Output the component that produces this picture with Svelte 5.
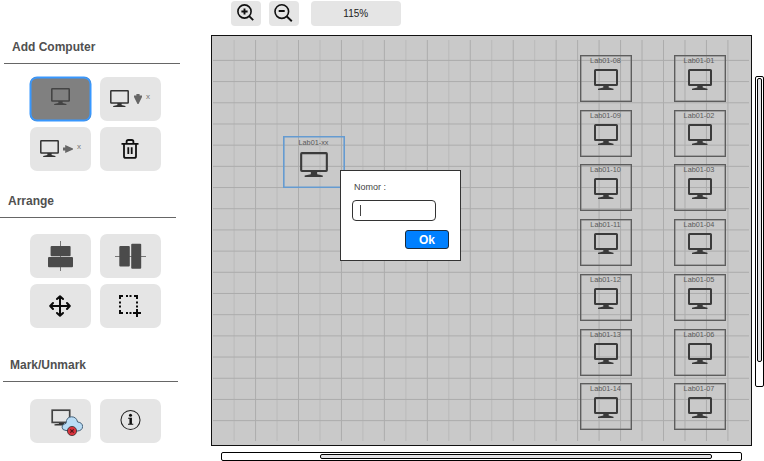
<script>
  const nodes = [];
  const rows = [55, 109.7, 164.3, 219, 274, 328.7, 383.3];
  for (let i = 0; i < 7; i++) {
    nodes.push({ name: 'Lab01-' + String(i + 8).padStart(2, '0'), x: 580, y: rows[i] });
    nodes.push({ name: 'Lab01-0' + (i + 1), x: 673.5, y: rows[i] });
  }
  const cols = Array.from({ length: 24 }, (_, i) => 22.1 + i * 21.47);
  const lines = Array.from({ length: 18 }, (_, i) => 24.4 + i * 21.19);
</script>

{#snippet monitor(w, h, color, sw)}
  <svg width={w} height={h} viewBox="0 0 24 21" preserveAspectRatio="none" style="color:{color}">
    <rect x="1" y="1" width="22" height="15" rx="0.6" fill="none" stroke="currentColor" stroke-width={sw} />
    <path d="M9.3 16h5.4v2.6l4.8 1.1v1.2H4v-1.2l5.3-1.1z" fill="currentColor" />
  </svg>
{/snippet}

<div class="app">
  <aside>
    <section class="add">
      <h2>Add Computer</h2>
      <div class="buttons">
        <button class="active" aria-label="Add one"><span class="up">{@render monitor(19, 17, '#444', 2)}</span></button>
        <button class="multi" aria-label="Add column">
          {@render monitor(19, 17, '#333', 1.9)}
          <svg width="8" height="10" viewBox="0 0 8 10"><path d="M0 1.4h2.4V0h3.2v1.4H8V3L4.5 10h-1L0 3z" fill="#666" /></svg>
          <small>x</small>
        </button>
        <button class="multi row" aria-label="Add row">
          {@render monitor(19, 17, '#333', 1.9)}
          <svg width="10" height="8" viewBox="0 0 10 8"><path d="M0 2.6h2.2V0L10 3.5v1L2.2 8V5.4H0z" fill="#666" /></svg>
          <small>x</small>
        </button>
        <button class="nudge" aria-label="Delete">
          <svg width="18" height="20" viewBox="0 0 18 20" fill="none" stroke="#111" stroke-width="1.8">
            <path d="M.5 4.8h17M3 4.8v12.4q0 1.7 1.7 1.7h8.6q1.7 0 1.7-1.7V4.8M5.6 4.5V2.6Q5.6 1 7.2 1h3.6q1.6 0 1.6 1.6v1.9M7.3 8.2v6.8M10.7 8.2v6.8" />
          </svg>
        </button>
      </div>
    </section>
    <section class="arrange">
      <h2>Arrange</h2>
      <div class="buttons">
        <button aria-label="Align centers">
          <svg width="25" height="30" viewBox="0 0 25 30"><path d="M12.5 0v30" stroke="#777" /><g fill="#4b4b4b"><rect x="2.6" y="5" width="20" height="10.3" rx="1" /><rect x="0" y="16" width="25" height="10.2" rx="1" /></g></svg>
        </button>
        <button aria-label="Align middles">
          <svg width="31" height="26" viewBox="0 0 31 26"><path d="M0 13.5h31" stroke="#777" /><g fill="#4b4b4b"><rect x="4.3" y="3" width="10.5" height="20.5" rx="1" /><rect x="16.2" y=".7" width="10" height="25" rx="1" /></g></svg>
        </button>
        <button class="nudge" aria-label="Move">
          <svg width="22" height="22" viewBox="0 0 22 22" fill="none" stroke="#0b0b0b" stroke-width="2" stroke-linecap="round" stroke-linejoin="round">
            <path d="M11 1.4v19.2M1.4 11h19.2M8 4l3-2.8L14 4M8 18l3 2.8 3-2.8M4 8l-2.8 3L4 14M18 8l2.8 3-2.8 3" />
          </svg>
        </button>
        <button class="nudge" aria-label="Select area">
          <svg width="22" height="22" viewBox="0 0 22 22" fill="none" stroke="#0b0b0b" stroke-width="2">
            <path d="M1 4V1h3M7 1h2M10.5 1h2M15 1h3v3M1 6.5v2M1 10.5v2M1 15v3h3M7 18h2M10.5 18h2M18 6.5v2M18 10.5v2M18 14v8M14 18h8" />
          </svg>
        </button>
      </div>
    </section>
    <section class="mark">
      <h2>Mark/Unmark</h2>
      <div class="buttons">
        <button aria-label="Unmark">
          <svg class="cloud" width="32" height="28" viewBox="0 0 32 28">
            <rect x="1.2" y="1.2" width="17.5" height="12.2" fill="none" stroke="#444" stroke-width="1.7" />
            <path d="M8 14h5v2.5H3.5v-1.2L8 14.8z" fill="#333" />
            <path d="M15 21.5q-3.8-.2-4-3.4.2-3 4-3.8.4-6.5 5.6-6.5 4.8 0 6 5.2 5 .6 5 4.6-.3 4-5 4.4z" fill="#b9dcf5" stroke="#456078" />
            <circle cx="21" cy="22" r="4.6" fill="#d8333d" stroke="#333" stroke-width=".8" />
            <path d="M19.3 20.3l3.4 3.4M22.7 20.3l-3.4 3.4" stroke="#571418" stroke-width="1.1" />
          </svg>
        </button>
        <button class="info" aria-label="Information">
          <svg width="21" height="22" viewBox="0 0 22 22">
            <circle cx="11" cy="11" r="10" fill="none" stroke="#222" stroke-width="1.1" />
            <circle cx="11" cy="6" r="1.6" fill="#111" />
            <path d="M8.5 8.7h4v6.3h1.4v1H8.4v-1h1.5V9.7H8.5z" fill="#111" />
          </svg>
        </button>
      </div>
    </section>
  </aside>

  <main>
    <div class="toolbar">
      <button aria-label="Zoom in">
        <svg width="17" height="18" viewBox="0 0 17 18" fill="none" stroke="#111" stroke-width="1.6"><circle cx="7.5" cy="7.5" r="6.6" /><path d="M12.2 12.2l4 4M7.5 4.4v6.2M4.4 7.5h6.2" stroke-width="1.9" /></svg>
      </button>
      <button aria-label="Zoom out">
        <svg width="19" height="18" viewBox="0 0 19 18" fill="none" stroke="#111" stroke-width="1.6"><circle cx="7.8" cy="7.6" r="6.8" /><path d="M12.6 12.2l5.2 5.1M4.7 7h6" stroke-width="1.9" /></svg>
      </button>
      <div class="level">115%</div>
    </div>
    <div class="middle">
      <div class="canvas">
        <svg class="grid" width="539" height="409">
          {#each cols as x, i}<path d="M{x} 4v401" class:soft={i % 2 === 0 && i < 15} />{/each}
          {#each lines as y}<path d="M1 {y}h536" />{/each}
        </svg>
        {#each nodes as n}
          <div class="node" style="left:{n.x - 212}px;top:{n.y - 36}px">
            <span>{n.name}</span>{@render monitor(24, 21, '#3b3b3b', 2)}
          </div>
        {/each}
        <div class="node selected">
          <span>Lab01-xx</span>{@render monitor(28, 25, '#3b3b3b', 1.8)}
        </div>
        <div class="dialog">
          <label for="number">Nomor :</label>
          <div class="field" id="number"><i></i></div>
          <button>Ok</button>
        </div>
      </div>
      <div class="vbar"><div></div></div>
    </div>
    <div class="hbar"><div></div></div>
  </main>
</div>

<style>
  :global(body) { margin: 0; background: #fff; }
  * { box-sizing: border-box; }
  svg { display: block; flex: none; }
  .app { display: flex; width: 764px; height: 461px; overflow: hidden; font-family: "Liberation Sans", Arial, sans-serif; color: #444; }
  aside { width: 211px; flex: none; }
  section { height: 164px; }
  .add { height: 154px; margin-top: 37px; }
  h2 { margin: 0; height: 27px; width: 176px; padding-left: 8px; border-bottom: 1px solid #666; font-size: 12px; line-height: 20px; color: #505050; }
  .add h2 { margin-left: 4px; }
  .mark h2 { width: 175px; margin-left: 3px; padding-left: 7px; }
  .buttons { display: grid; grid-template-columns: 61px 61px; grid-auto-rows: 44px; gap: 6px 9px; padding: 13px 0 0 30px; }
  .arrange .buttons { padding-top: 16px; }
  .mark .buttons { padding-top: 17px; }
  button { border: 0; padding: 0; border-radius: 7px; background: #e5e5e5; display: flex; align-items: center; justify-content: center; font-family: inherit; }
  .nudge { padding: 0 1px 1px 0; }
  .info { padding-bottom: 2px; }
  .active { background: #808080; box-shadow: inset 0 0 0 1.5px #3898ff, 0 0 0 .5px #3898ff; }
  .up { padding-bottom: 5px; }
  .multi { gap: 4.5px; justify-content: flex-start; padding: 0 0 1px 10px; }
  .row { gap: 4px; }
  small { font-size: 8px; line-height: 8px; color: #777; padding-bottom: 3px; }
  .cloud { margin-left: 12px; margin-top: 4px; }
  main { width: 553px; flex: none; }
  .toolbar { display: flex; height: 35px; padding: 1px 0 0 19.5px; }
  .toolbar button { width: 30.5px; height: 24.5px; border-radius: 4px; margin-right: 7.5px; padding-right: 1px; }
  .toolbar .level { margin-left: 4.5px; width: 89.5px; height: 24.5px; background: #e5e5e5; border-radius: 4px; text-align: center; font-size: 10px; line-height: 25px; color: #222; }
  .middle { display: flex; height: 411px; }
  .canvas { position: relative; width: 541px; height: 411px; background: #c9c9c9; border: 1px solid #111; flex: none; }
  .grid path { stroke: #acacac; stroke-width: 1; fill: none; }
  .grid .soft { stroke: #bababa; }
  .node { position: absolute; width: 52px; height: 47px; border: 1px solid #5d5d5d; box-shadow: inset 0 0 0 .5px #777; display: flex; flex-direction: column; align-items: center; }
  .node span { font-size: 7.3px; line-height: 10px; height: 13px; color: #5a5a5a; margin-left: -1px; white-space: nowrap; }
  .node.selected { left: 71px; top: 100px; width: 62px; height: 52px; border-color: #659bd1; box-shadow: inset 0 0 0 .6px #659bd1; }
  .selected span { height: 15px; line-height: 12px; }
  .dialog { position: absolute; left: 128px; top: 134px; width: 121px; height: 91px; background: #fff; border: 1px solid #333; padding: 10px 11px; }
  label { display: block; font-size: 9px; line-height: 12px; padding-left: 2px; color: #444; }
  .field { width: 84px; height: 21px; margin-top: 7px; border: 1px solid #333; border-radius: 4px; padding: 4px 7px; }
  .field i { display: block; width: 1px; height: 11px; background: #444; }
  .dialog button { width: 44px; height: 19px; border: 1px solid #1b2b3b; border-radius: 3px; background: #0080ff; color: #fff; font-weight: 700; font-size: 12px; margin: 9px 0 0 53px; }
  .vbar { width: 9px; height: 311px; margin: 41px 0 0 3px; border: 1px solid #000; border-radius: 2px; padding: 1px; background: #fff; }
  .vbar div { width: 5px; height: 284px; border: 1px solid #000; border-radius: 2px; background: #e2e2e5; }
  .hbar { width: 521px; height: 9px; margin: 6px 0 0 10px; border: 1px solid #000; border-radius: 2px; padding: 1px 0 0 98px; background: #fff; }
  .hbar div { width: 392px; height: 5px; border: 1px solid #000; border-radius: 2px; background: #e2e2e5; }
</style>
